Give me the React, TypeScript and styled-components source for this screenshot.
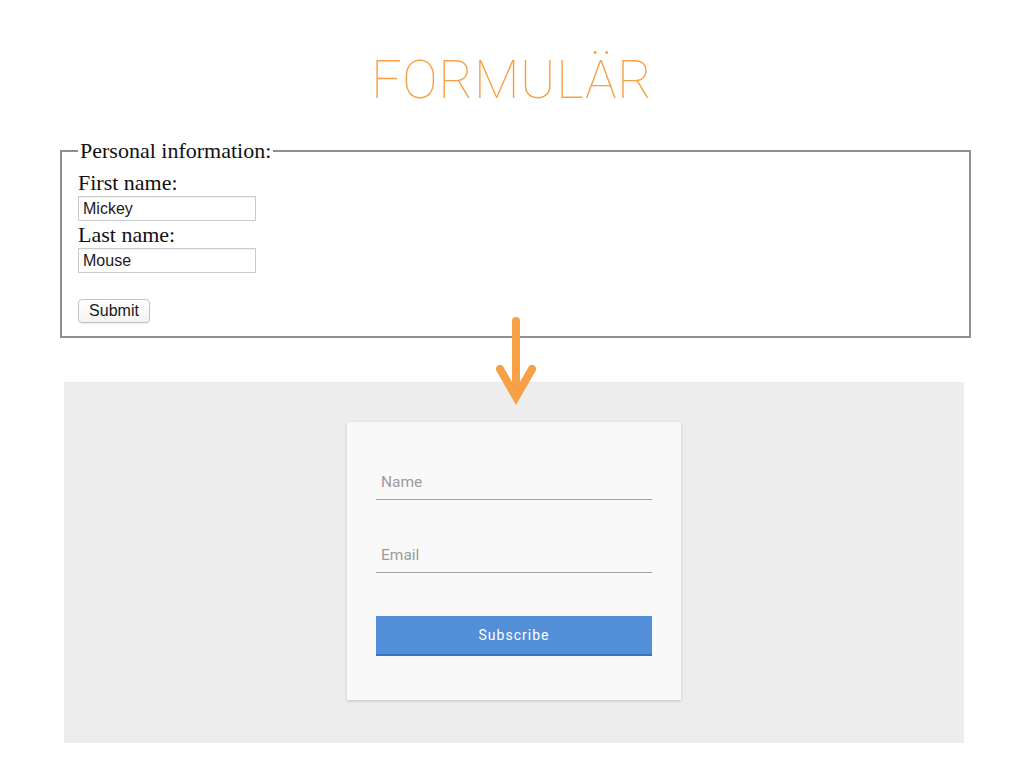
import styled, { createGlobalStyle } from "styled-components";

const GlobalStyle = createGlobalStyle`
  html, body {
    margin: 0;
    padding: 0;
    background: #ffffff;
  }
  body {
    width: 1024px;
    height: 768px;
    overflow: hidden;
    font-family: "Liberation Serif", serif;
  }
`;

export default function App() {
  return (
    <>
      <GlobalStyle />
      <Page>
        <Title>FORMULÄR</Title>

        <OldForm>
          <Legend>Personal information:</Legend>
          <Label>First name:</Label>
          <OldInput defaultValue="Mickey" />
          <Label>Last name:</Label>
          <OldInput defaultValue="Mouse" />
          <Spacer />
          <OldButton type="button">Submit</OldButton>
        </OldForm>

        <Connector>
          <Arrow width="44" height="92" viewBox="0 0 44 92">
            <line x1="22" y1="4" x2="22" y2="78" stroke="#f7a046" strokeWidth="8" strokeLinecap="round" />
            <polyline
              points="6,52 22,80 38,52"
              fill="none"
              stroke="#f7a046"
              strokeWidth="8"
              strokeLinecap="round"
              strokeLinejoin="miter"
            />
          </Arrow>
        </Connector>

        <Panel>
          <Card>
            <Field>Name</Field>
            <Field $gap={35}>Email</Field>
            <SubscribeButton type="button">Subscribe</SubscribeButton>
          </Card>
        </Panel>
      </Page>
    </>
  );
}

const Page = styled.div`
  display: flex;
  flex-direction: column;
  padding-top: 47px;
`;

const Title = styled.h1`
  margin: 0;
  text-align: center;
  font-family: "Roboto", "Lato", sans-serif;
  font-weight: 100;
  font-size: 53px;
  line-height: 66px;
  color: #f7a046;
  letter-spacing: 0.8px;
`;

const OldForm = styled.fieldset`
  margin: 25px 0 0 60px;
  width: 911px;
  box-sizing: border-box;
  border: 2px solid #8f8f8f;
  padding: 7px 16px 13px;
  display: flex;
  flex-direction: column;
  align-items: flex-start;
`;

const Legend = styled.legend`
  padding: 0 2px;
  font-family: "Liberation Serif", serif;
  font-size: 22px;
  line-height: 25px;
  color: #111;
`;

const Label = styled.label`
  font-family: "Liberation Serif", serif;
  font-size: 22px;
  line-height: 25px;
  color: #111;
`;

const OldInput = styled.input`
  width: 178px;
  height: 25px;
  box-sizing: border-box;
  border: 1px solid #cbcbcb;
  box-shadow: inset 0 1px 1px rgba(0, 0, 0, 0.06);
  padding: 0 4px;
  margin: 1px 0;
  font-family: "Liberation Sans", sans-serif;
  font-size: 16px;
  color: #1a1a1a;
  outline: none;
`;

const Spacer = styled.div`
  height: 25px;
`;

const OldButton = styled.button`
  width: 72px;
  height: 24px;
  border: 1px solid #c2c2c2;
  border-radius: 4px;
  background: linear-gradient(#ffffff, #f3f3f3);
  box-shadow: 0 1px 1px rgba(0, 0, 0, 0.08);
  font-family: "Liberation Sans", sans-serif;
  font-size: 16px;
  color: #1a1a1a;
  padding: 0;
`;

const Connector = styled.div`
  position: relative;
  height: 44px;
`;

const Arrow = styled.svg`
  position: absolute;
  left: 494px;
  top: -21px;
`;

const Panel = styled.div`
  margin-left: 64px;
  width: 900px;
  height: 361px;
  box-sizing: border-box;
  background: #ededed;
  padding-top: 40px;
  display: flex;
  justify-content: center;
  align-items: flex-start;
`;

const Card = styled.div`
  width: 334px;
  box-sizing: border-box;
  padding: 40px 29px 44px;
  background: #f9f9f9;
  box-shadow: 0 1px 3px rgba(0, 0, 0, 0.18);
  display: flex;
  flex-direction: column;
`;

const Field = styled.div<{ $gap?: number }>`
  height: 38px;
  margin-top: ${(p) => p.$gap ?? 0}px;
  border-bottom: 1px solid #a3a3a3;
  display: flex;
  align-items: center;
  padding: 2px 0 0 5px;
  box-sizing: border-box;
  font-family: "Roboto", "Liberation Sans", sans-serif;
  font-size: 15.5px;
  color: #9c9c9c;
`;

const SubscribeButton = styled.button`
  margin-top: 43px;
  height: 40px;
  border: none;
  border-bottom: 2px solid #3470c4;
  background: #538ed9;
  color: #ffffff;
  font-family: "Roboto", "Liberation Sans", sans-serif;
  font-size: 14px;
  letter-spacing: 1px;
  padding: 0;
`;
